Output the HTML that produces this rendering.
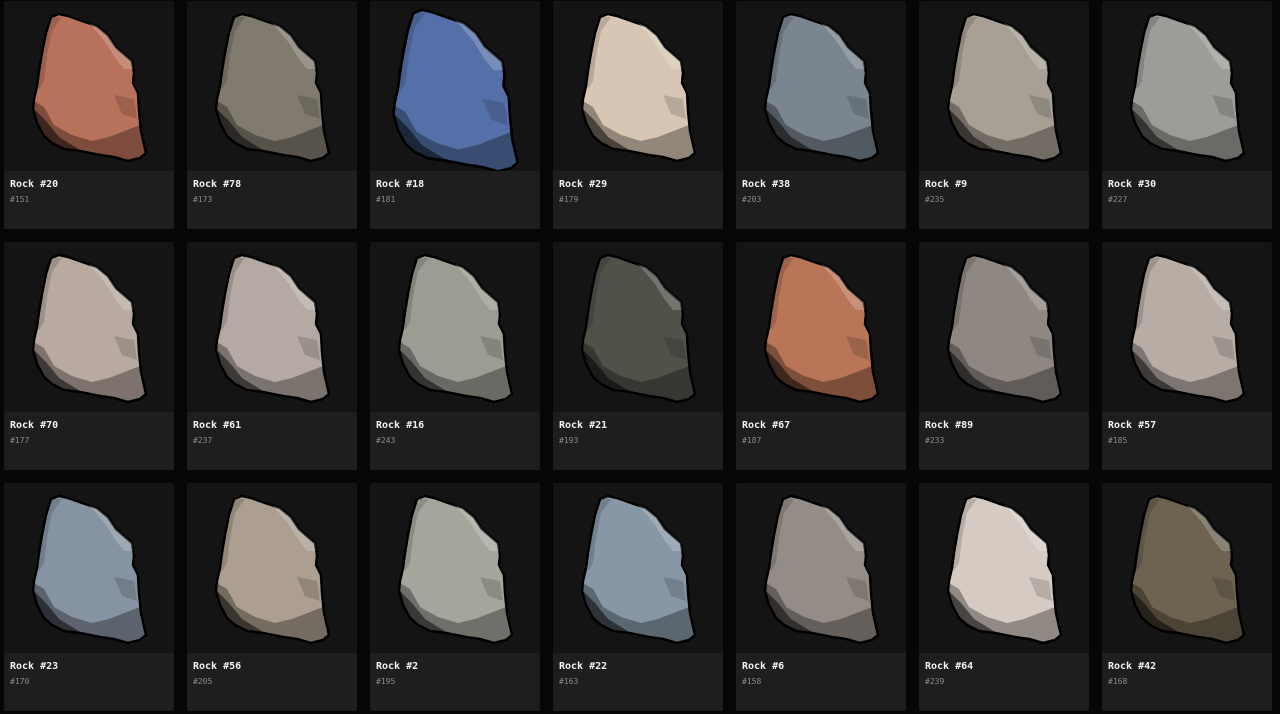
<!DOCTYPE html>
<html><head><meta charset="utf-8"><style>
body{margin:0;background:#060606;width:1280px;height:714px;overflow:hidden;font-family:"DejaVu Sans Mono","Liberation Mono",monospace;}
.c{position:absolute;width:170px;height:228px;background:#141414;border-radius:2px;overflow:hidden}
.c svg{position:absolute;left:0;top:0}
.l{position:absolute;left:0;top:170px;width:170px;height:58px;background:#1e1e1e}
.t{position:absolute;left:6px;top:8px;color:#f2f2f2;font-size:10px;font-weight:bold}
.s{position:absolute;left:6px;top:24px;color:#8a8a8a;font-size:8px}
</style></head><body>
<div id="g"></div>
<script>
const d=[["20","151","#b8715a"],["78","173","#807b6e"],["18","181","#5570a8"],["29","179","#d6c6b3"],["38","203","#7a8590"],["9","235","#a8a095"],["30","227","#9c9c98"],
["70","177","#b8aaa0"],["61","237","#b5aaa3"],["16","243","#9a9d92"],["21","193","#4f5249"],["67","187","#b87558"],["89","233","#8f8882"],["57","185","#b8ada5"],
["23","170","#8693a3"],["56","205","#ac9e90"],["2","195","#a5a59c"],["22","163","#8797a5"],["6","158","#948c86"],["64","239","#d5cbc3"],["42","168","#6d6350"]];
const xs=[4,187,370,553,736,919,1102],ys=[1,242,483];
let h="";
d.forEach((r,i)=>{const x=xs[i%7],y=ys[Math.floor(i/7)];
const tr=r[0]=="18"?'transform="translate(85 88) scale(1.1) translate(-85 -85)"':'';
h+=`<div class="c" style="left:${x}px;top:${y}px"><svg width="170" height="170"><g ${tr}>
<path d="M47,16 L55,13 L64,15 L78,20 L93,25 L104,34 L112,46 L120,53 L128,60 L130,72 L129,82 L134,92 L135,110 L137,130 L142,152 L136,157 L124,160 L110,156 L96,154 L76,150 L60,148 L48,142 L40,135 L33,122 L29,108 L30,98 L33,85 L35,70 L38,52 L42,32 Z" fill="${r[2]}" stroke="#000" stroke-width="2.5" stroke-linejoin="round"/>
<path d="M85,22 L93,25 L104,34 L112,46 L120,53 L128,60 L129,68 L120,68 L112,58 L102,42 L92,30 Z" fill="#fff" opacity=".2"/>
<path d="M47,16 L58,16 L48,30 L43,55 L40,80 L35,88 L33,85 L35,70 L38,52 L42,32 Z" fill="#000" opacity=".15"/>
<path d="M110,94 L130,98 L133,118 L118,113 Z" fill="#000" opacity=".15"/>
<path d="M30,100 L40,106 L50,124 L68,134 L88,140 L105,136 L136,124 L142,152 L136,157 L124,160 L96,154 L76,150 L60,148 L48,142 L40,135 L33,122 L29,108 Z" fill="#000" opacity=".32"/>
<path d="M30,108 L42,120 L55,136 L68,144 L78,150 L60,148 L48,142 L40,135 L33,122 Z" fill="#000" opacity=".5"/>
</g></svg><div class="l"><div class="t">Rock #${r[0]}</div><div class="s">#${r[1]}</div></div></div>`;});
document.getElementById("g").innerHTML=h;
</script>
</body></html>
